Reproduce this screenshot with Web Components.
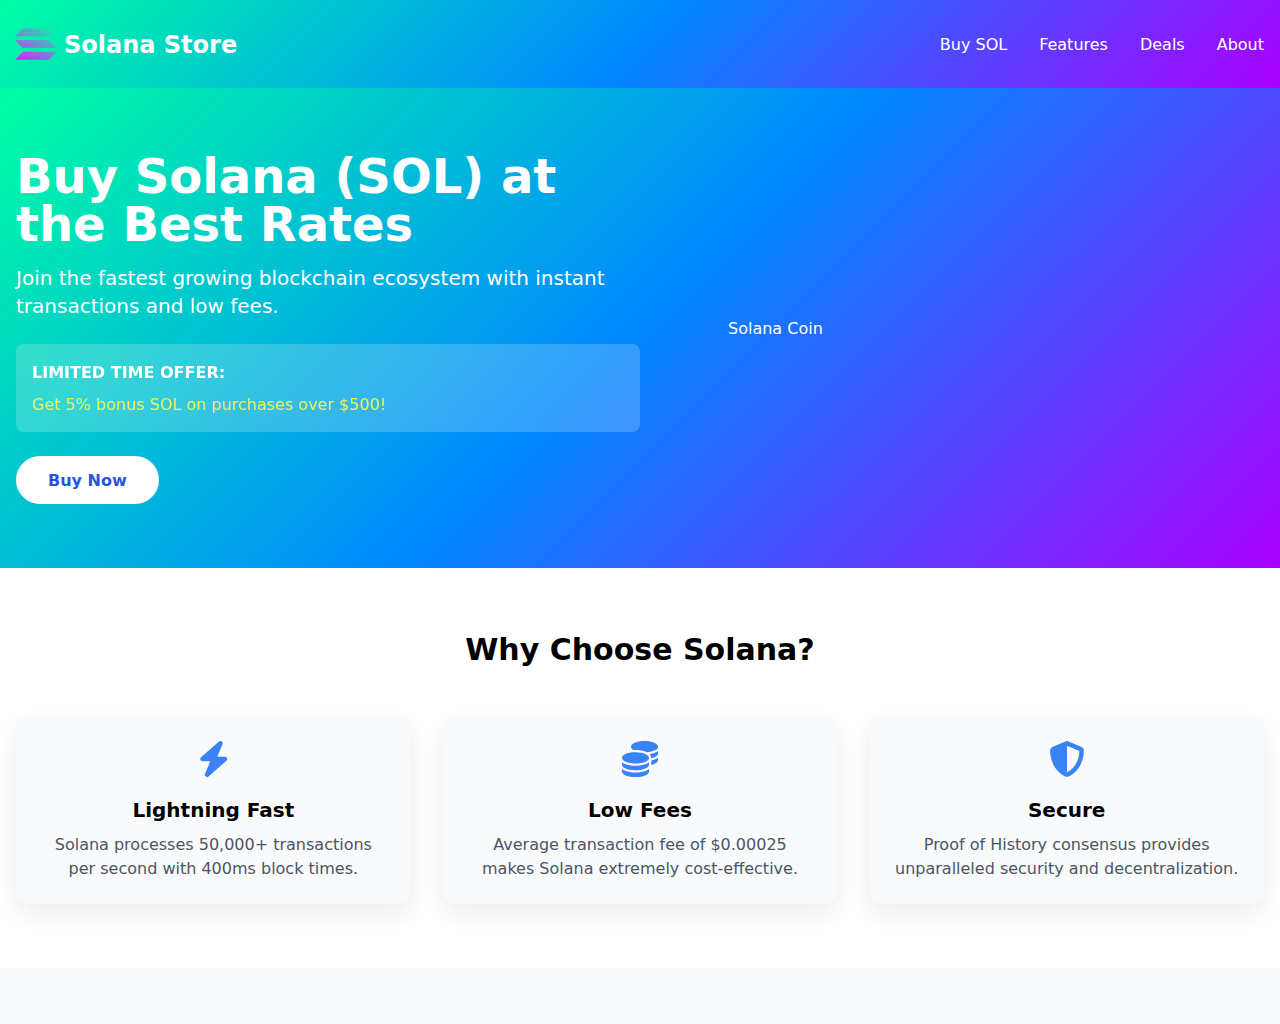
<!DOCTYPE html>
<html lang="en">
<head>
<meta charset="utf-8">
<title>Solana Store</title>
<style>
  html, body { margin: 0; padding: 0; background: #fff; }
  body { font-family: "DejaVu Sans", sans-serif; font-size: 16px; line-height: 24px; color: #000; }
</style>
</head>
<body>
<store-header>
  <a slot="nav">Buy SOL</a>
  <a slot="nav">Features</a>
  <a slot="nav">Deals</a>
  <a slot="nav">About</a>
</store-header>

<hero-section>
  <span slot="title">Buy Solana (SOL) at the Best Rates</span>
  <span slot="lead">Join the fastest growing blockchain ecosystem with instant transactions and low fees.</span>
  <offer-box slot="offer" heading="LIMITED TIME OFFER:">Get 5% bonus SOL on purchases over $500!</offer-box>
  <span slot="action">Buy Now</span>
  <span slot="picture">Solana Coin</span>
</hero-section>

<features-section heading="Why Choose Solana?">
  <feature-card icon="bolt" title="Lightning Fast">Solana processes 50,000+ transactions per second with 400ms block times.</feature-card>
  <feature-card icon="coins" title="Low Fees">Average transaction fee of $0.00025 makes Solana extremely cost-effective.</feature-card>
  <feature-card icon="shield" title="Secure">Proof of History consensus provides unparalleled security and decentralization.</feature-card>
</features-section>

<page-tail></page-tail>

<script>
  const BRAND_GRADIENT = "linear-gradient(135deg, #00ffa3 0%, #0088ff 50%, #aa00ff 100%)";

  const ICONS = {
    bolt: {
      box: "0 0 448 512",
      d: "M349.4 44.6c5.9-13.7 1.5-29.7-10.6-38.5s-28.6-8-39.9 1.8l-256 224c-10 8.8-13.6 22.9-8.9 35.3S50.7 288 64 288H175.5L98.6 467.4c-5.9 13.7-1.5 29.7 10.6 38.5s28.6 8 39.9-1.8l256-224c10-8.8 13.6-22.9 8.9-35.3s-16.6-20.7-30-20.7H272.5L349.4 44.6z"
    },
    coins: {
      box: "0 0 512 512",
      d: "M512 80c0 18-14.3 34.6-38.4 48c-29.1 16.1-72.5 27.5-122.3 30.9c-3.7-1.8-7.4-3.5-11.3-5C300.6 137.4 248.2 128 192 128c-8.3 0-16.4 .2-24.5 .6l-1.1-.6C142.3 114.6 128 98 128 80c0-44.2 86-80 192-80S512 35.8 512 80zM160.7 161.1c10.2-.7 20.7-1.1 31.3-1.1c62.2 0 117.4 12.3 152.5 31.4C369.3 204.9 384 221.7 384 240c0 4-.7 7.9-2.1 11.7c-4.6 13.2-17 25.3-35 35.5c0 0 0 0 0 0c-.1 .1-.3 .1-.4 .2l0 0 0 0c-.3 .2-.6 .3-.9 .5c-35 19.4-90.8 32-153.6 32c-59.6 0-112.9-11.3-148.2-29.1c-1.9-.9-3.7-1.9-5.5-2.9C14.3 274.6 0 258 0 240c0-34.8 53.4-64.5 128-75.4c10.5-1.5 21.4-2.7 32.7-3.5zM416 240c0-21.9-10.6-39.9-24.1-53.4c28.3-4.4 54.2-11.4 76.2-20.5c16.3-6.8 31.5-15.2 43.9-25.5V176c0 19.3-16.5 37.1-43.8 50.9c-14.6 7.4-32.4 13.7-52.4 18.5c.1-1.8 .2-3.5 .2-5.3zm-32 96c0 18-14.3 34.6-38.4 48c-1.8 1-3.6 1.9-5.5 2.9C304.9 404.7 251.6 416 192 416c-62.8 0-118.6-12.6-153.6-32C14.3 370.6 0 354 0 336V300.6c12.5 10.3 27.6 18.7 43.9 25.5C83.4 342.6 135.8 352 192 352s108.6-9.4 148.1-25.9c7.8-3.2 15.3-6.9 22.4-10.9c6.1-3.4 11.8-7.2 17.2-11.2c1.5-1.1 2.9-2.3 4.3-3.4V304v5.7V336zm32 0V304 278.1c19-4.2 36.5-9.5 52.1-16c16.3-6.8 31.5-15.2 43.9-25.5V272c0 10.5-5 21-14.9 30.9c-16.3 16.3-45 29.7-81.3 38.4c.1-1.7 .2-3.5 .2-5.3zM192 448c56.2 0 108.6-9.4 148.1-25.9c16.3-6.8 31.5-15.2 43.9-25.5V432c0 44.2-86 80-192 80S0 476.2 0 432V396.6c12.5 10.3 27.6 18.7 43.9 25.5C83.4 438.6 135.8 448 192 448z"
    },
    shield: {
      box: "0 0 512 512",
      d: "M256 0c4.6 0 9.2 1 13.4 2.9L457.7 82.8c22 9.3 38.4 31 38.3 57.2c-.5 99.2-41.3 280.7-213.6 363.2c-16.7 8-36.1 8-52.8 0C57.3 420.7 16.5 239.2 16 140c-.1-26.2 16.3-47.9 38.3-57.2L242.7 2.9C246.8 1 251.4 0 256 0zm0 66.8V444.8C394 378 431.1 230.1 432 141.4L256 66.8l0 0z"
    }
  };

  class StoreHeader extends HTMLElement {
    constructor() {
      super();
      const shadow = this.attachShadow({ mode: "open" });
      shadow.innerHTML = /* html */`
      <style>
        :host {
          display: flex;
          align-items: center;
          justify-content: space-between;
          box-sizing: border-box;
          height: 88px;
          padding: 24px 16px;
          background: ${BRAND_GRADIENT};
          color: #fff;
        }
        .brand {
          display: flex;
          align-items: center;
          gap: 8px;
          font-size: 24px;
          line-height: 32px;
          font-weight: 700;
        }
        .brand svg { display: block; width: 40px; height: 40px; }
        .brand span { padding-top: 2px; }
        nav { display: flex; gap: 32px; padding-top: 2px; }
      </style>
      <div class="brand">
        <svg viewBox="0 0 397.7 311.7" aria-hidden="true">
          <defs>
            <linearGradient id="sol" gradientUnits="userSpaceOnUse" x1="360.9" y1="-37.5" x2="141.2" y2="383.9">
              <stop offset="0" stop-color="#00ffa3"/>
              <stop offset="1" stop-color="#dc1fff"/>
            </linearGradient>
          </defs>
          <path fill="url(#sol)" d="M64.6,237.9c2.4-2.4,5.7-3.8,9.2-3.8h317.4c5.8,0,8.7,7,4.6,11.1l-62.7,62.7c-2.4,2.4-5.7,3.8-9.2,3.8H6.5c-5.8,0-8.7-7-4.6-11.1L64.6,237.9z"/>
          <path fill="url(#sol)" d="M64.6,3.8C67.1,1.4,70.4,0,73.8,0h317.4c5.8,0,8.7,7,4.6,11.1l-62.7,62.7c-2.4,2.4-5.7,3.8-9.2,3.8H6.5c-5.8,0-8.7-7-4.6-11.1L64.6,3.8z"/>
          <path fill="url(#sol)" d="M333.1,120.1c-2.4-2.4-5.7-3.8-9.2-3.8H6.5c-5.8,0-8.7,7-4.6,11.1l62.7,62.7c2.4,2.4,5.7,3.8,9.2,3.8h317.4c5.8,0,8.7-7,4.6-11.1L333.1,120.1z"/>
        </svg>
        <span>Solana Store</span>
      </div>
      <nav><slot name="nav"></slot></nav>
      `;
    }
  }

  class HeroSection extends HTMLElement {
    constructor() {
      super();
      const shadow = this.attachShadow({ mode: "open" });
      shadow.innerHTML = /* html */`
      <style>
        :host {
          display: flex;
          align-items: center;
          box-sizing: border-box;
          height: 480px;
          padding: 64px 16px;
          background: ${BRAND_GRADIENT};
          color: #fff;
        }
        .copy { flex: 0 0 624px; }
        h1 {
          margin: 0 0 16px;
          font-size: 48px;
          line-height: 48px;
          font-weight: 700;
        }
        p {
          margin: 0 0 24px;
          font-size: 20px;
          line-height: 28px;
        }
        .offer { display: block; margin-bottom: 24px; }
        button {
          display: block;
          border: 0;
          padding: 13px 32px 11px;
          border-radius: 9999px;
          background: #fff;
          color: #2456dd;
          font: 700 16px/24px "DejaVu Sans", sans-serif;
        }
        .side { flex: 1; display: flex; justify-content: center; padding-top: 2px; }
        .picture { width: 448px; }
      </style>
      <div class="copy">
        <h1><slot name="title"></slot></h1>
        <p><slot name="lead"></slot></p>
        <div class="offer"><slot name="offer"></slot></div>
        <button><slot name="action"></slot></button>
      </div>
      <div class="side"><div class="picture"><slot name="picture"></slot></div></div>
      `;
    }
  }

  class OfferBox extends HTMLElement {
    constructor() {
      super();
      const shadow = this.attachShadow({ mode: "open" });
      shadow.innerHTML = /* html */`
      <style>
        :host {
          display: block;
          padding: 17px 16px 15px;
          border-radius: 8px;
          background: rgba(255, 255, 255, 0.2);
          -webkit-backdrop-filter: blur(10px);
          backdrop-filter: blur(10px);
        }
        .head { font-weight: 700; margin-bottom: 8px; }
        .body { color: #f2f25a; }
      </style>
      <div class="head"></div>
      <div class="body"><slot></slot></div>
      `;
      this.$head = shadow.querySelector(".head");
    }

    connectedCallback() {
      this.$head.textContent = this.getAttribute("heading") || "";
    }
  }

  class FeaturesSection extends HTMLElement {
    constructor() {
      super();
      const shadow = this.attachShadow({ mode: "open" });
      shadow.innerHTML = /* html */`
      <style>
        :host {
          display: block;
          padding: 64px 16px;
          background: #fff;
        }
        h2 {
          margin: 0 0 48px;
          text-align: center;
          font-size: 30px;
          line-height: 36px;
          font-weight: 700;
        }
        .grid {
          display: grid;
          grid-template-columns: repeat(3, 1fr);
          gap: 32px;
        }
      </style>
      <h2></h2>
      <div class="grid"><slot></slot></div>
      `;
      this.$heading = shadow.querySelector("h2");
    }

    connectedCallback() {
      this.$heading.textContent = this.getAttribute("heading") || "";
    }
  }

  class FeatureCard extends HTMLElement {
    constructor() {
      super();
      const shadow = this.attachShadow({ mode: "open" });
      shadow.innerHTML = /* html */`
      <style>
        :host {
          display: block;
          padding: 24px;
          border-radius: 12px;
          background: #f9fafb;
          box-shadow: 0 10px 25px rgba(0, 0, 0, 0.07);
          text-align: center;
        }
        .icon {
          display: flex;
          justify-content: center;
          height: 40px;
          margin-bottom: 16px;
        }
        svg { display: block; height: 36px; fill: #3b82f6; margin-top: 1px; }
        h3 {
          margin: 0 0 8px;
          font-size: 20px;
          line-height: 28px;
          font-weight: 700;
        }
        p { margin: 0 0 -1px; padding-top: 1px; color: #4b5563; }
      </style>
      <div class="icon"><svg><path></path></svg></div>
      <h3></h3>
      <p><slot></slot></p>
      `;
      this.$svg = shadow.querySelector("svg");
      this.$path = shadow.querySelector("path");
      this.$title = shadow.querySelector("h3");
    }

    connectedCallback() {
      const icon = ICONS[this.getAttribute("icon")];
      this.$svg.setAttribute("viewBox", icon.box);
      this.$svg.setAttribute("width", icon.box === "0 0 448 512" ? "31.5" : "36");
      this.$path.setAttribute("d", icon.d);
      this.$title.textContent = this.getAttribute("title") || "";
    }
  }

  class PageTail extends HTMLElement {
    constructor() {
      super();
      const shadow = this.attachShadow({ mode: "open" });
      shadow.innerHTML = /* html */`
      <style>
        :host { display: block; height: 56px; background: #f9fafb; }
      </style>
      `;
    }
  }

  customElements.define("store-header", StoreHeader);
  customElements.define("hero-section", HeroSection);
  customElements.define("offer-box", OfferBox);
  customElements.define("features-section", FeaturesSection);
  customElements.define("feature-card", FeatureCard);
  customElements.define("page-tail", PageTail);
</script>
</body>
</html>
